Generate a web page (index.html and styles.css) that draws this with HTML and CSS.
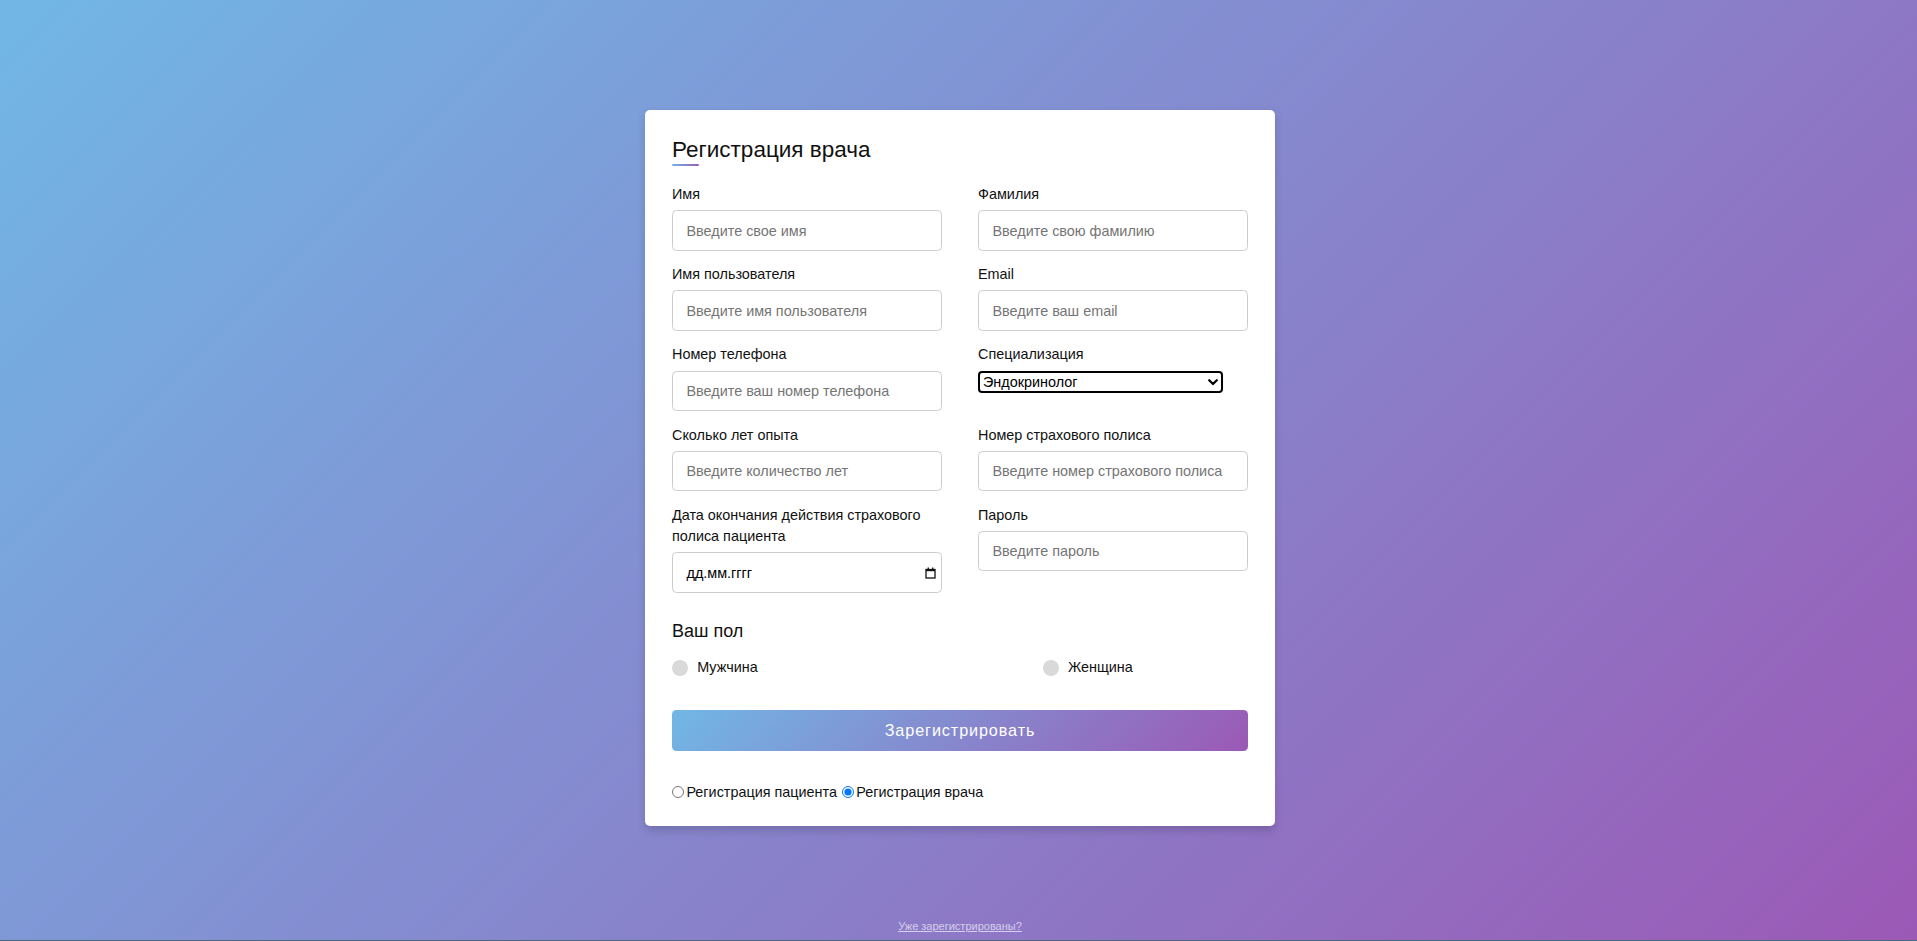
FILE: index.html
```html
<!DOCTYPE html>
<html lang="ru">
<head>
<meta charset="utf-8">
<title>Регистрация врача</title>
<link rel="stylesheet" href="styles.css">
</head>
<body>
  <div class="page">
    <div class="card">
      <div class="title">Регистрация врача</div>
      <form class="form">
        <div class="user-details">
          <div class="input-box">
            <span class="details">Имя</span>
            <input class="field" type="text" placeholder="Введите свое имя">
          </div>
          <div class="input-box">
            <span class="details">Фамилия</span>
            <input class="field" type="text" placeholder="Введите свою фамилию">
          </div>
          <div class="input-box">
            <span class="details">Имя пользователя</span>
            <input class="field" type="text" placeholder="Введите имя пользователя">
          </div>
          <div class="input-box">
            <span class="details details-latin">Email</span>
            <input class="field" type="text" placeholder="Введите ваш email">
          </div>
          <div class="input-box">
            <span class="details">Номер телефона</span>
            <input class="field" type="text" placeholder="Введите ваш номер телефона">
          </div>
          <div class="input-box">
            <span class="details">Специализация</span>
            <div class="select-wrap">
              <select class="select">
                <option>Эндокринолог</option>
                <option>Терапевт</option>
                <option>Кардиолог</option>
              </select>
              <svg class="chevron" width="10" height="7" viewBox="0 0 10 7"><polyline points="1.2,1.2 5,5 8.8,1.2" fill="none" stroke="#000" stroke-width="2.2" stroke-linecap="round" stroke-linejoin="round"/></svg>
            </div>
          </div>
          <div class="input-box">
            <span class="details">Сколько лет опыта</span>
            <input class="field" type="text" placeholder="Введите количество лет">
          </div>
          <div class="input-box">
            <span class="details">Номер страхового полиса</span>
            <input class="field" type="text" placeholder="Введите номер страхового полиса">
          </div>
          <div class="input-box">
            <span class="details">Дата окончания действия страхового полиса пациента</span>
            <div class="field date-field">
              <span class="date-text">дд.мм.гггг</span>
              <svg class="cal" width="11" height="12" viewBox="0 0 11 12">
                <rect x="1" y="2.5" width="9" height="8.5" fill="none" stroke="#111" stroke-width="1.3"/>
                <rect x="1" y="2" width="9" height="2.2" fill="#111"/>
                <rect x="2.6" y="0.5" width="1.3" height="2" fill="#111"/>
                <rect x="7.1" y="0.5" width="1.3" height="2" fill="#111"/>
              </svg>
            </div>
          </div>
          <div class="input-box">
            <span class="details">Пароль</span>
            <input class="field" type="password" placeholder="Введите пароль">
          </div>
        </div>

        <div class="gender-details">
          <span class="gender-title">Ваш пол</span>
          <div class="category">
            <label class="gender-option"><span class="dot"></span><span class="gender">Мужчина</span></label>
            <label class="gender-option"><span class="dot"></span><span class="gender">Женщина</span></label>
          </div>
        </div>

        <button class="submit" type="button">Зарегистрировать</button>

        <div class="switch">
          <label class="switch-option"><input class="switch-radio" type="radio" name="role">Регистрация пациента</label>
          <label class="switch-option"><input class="switch-radio" type="radio" name="role" checked>Регистрация врача</label>
        </div>
      </form>
    </div>
  </div>
  <a class="login" href="#">Уже зарегистрированы?</a>
  <div class="edge"></div>
</body>
</html>
```

FILE: styles.css
```css
* {
  box-sizing: border-box;
}

html, body {
  height: 100%;
}

body {
  margin: 0;
  display: flex;
  flex-direction: column;
  background: linear-gradient(135deg, #71b7e6, #9b59b6);
  font-family: "Liberation Sans", Arial, sans-serif;
  color: #111;
  overflow: hidden;
}

.page {
  flex: 1;
  display: flex;
  justify-content: center;
  align-items: flex-start;
  padding: 110px 0 0 3px;
}

.card {
  width: 630px;
  background: #fff;
  border-radius: 5px;
  padding: 22.5px 27px;
  box-shadow: 0 4.5px 9px rgba(0, 0, 0, 0.15);
}

.title {
  position: relative;
  font-size: 22.5px;
  line-height: 33.75px;
  color: #111;
}

.title::before {
  content: "";
  position: absolute;
  left: 0;
  bottom: 0;
  width: 27px;
  height: 2.7px;
  border-radius: 4.5px;
  background: linear-gradient(135deg, #71b7e6, #9b59b6);
}

.user-details {
  display: flex;
  flex-wrap: wrap;
  justify-content: space-between;
  align-items: flex-start;
  margin: 18px 0 11.5px;
}

.input-box {
  width: calc(50% - 18px);
  margin-bottom: 13.5px;
}

.details {
  display: block;
  font-size: 14.4px;
  line-height: 21.6px;
  margin-bottom: 4.5px;
  color: #111;
}

.details-latin {
  font-weight: 500;
}

.field {
  display: block;
  width: 100%;
  height: 40.5px;
  border: 1px solid #ccc;
  border-radius: 4.5px;
  padding: 0 13.5px;
  font-family: "Liberation Sans", Arial, sans-serif;
  font-size: 14.4px;
  color: #111;
  outline: none;
  background: #fff;
}

.field::placeholder {
  color: #757575;
}

.date-field {
  display: flex;
  align-items: center;
  justify-content: space-between;
  padding: 0 5px 0 13.5px;
}

.date-text {
  color: #000;
  font-size: 14.4px;
}

.cal {
  display: block;
}

.select-wrap {
  position: relative;
  width: 245px;
  height: 22px;
}

.select {
  -webkit-appearance: none;
  appearance: none;
  display: block;
  width: 100%;
  height: 22px;
  border: 2px solid #000;
  border-radius: 4px;
  padding: 0 20px 0 3px;
  font-family: "Liberation Sans", Arial, sans-serif;
  font-size: 14.4px;
  color: #000;
  background: #fff;
  outline: none;
}

.chevron {
  position: absolute;
  right: 5px;
  top: 8px;
}

.gender-title {
  display: block;
  font-size: 18px;
  line-height: 27px;
  color: #111;
}

.category {
  display: flex;
  justify-content: space-between;
  width: 80%;
  margin: 12.6px 0;
}

.gender-option {
  display: flex;
  align-items: center;
  gap: 9px;
  font-size: 14.4px;
  line-height: 21.6px;
}

.dot {
  width: 16.2px;
  height: 16.2px;
  border-radius: 50%;
  background: #d9d9d9;
}

.submit {
  display: block;
  width: 100%;
  height: 40.5px;
  margin: 31px 0 31.5px;
  border: none;
  border-radius: 4.5px;
  background: linear-gradient(135deg, #71b7e6, #9b59b6);
  color: #fff;
  font-family: "Liberation Sans", Arial, sans-serif;
  font-size: 16.2px;
  letter-spacing: 0.9px;
  cursor: pointer;
}

.switch {
  font-size: 14.4px;
  line-height: 21.6px;
  color: #111;
}

.switch-option {
  display: inline;
}

.switch-radio {
  width: 11.7px;
  height: 11.7px;
  margin: 0 2.7px 0 0;
  vertical-align: -1px;
}

.switch-option + .switch-option .switch-radio {
  margin-left: 1px;
}

.login {
  align-self: center;
  font-size: 11px;
  line-height: 13px;
  margin: 0 0 7px 3px;
  color: rgba(255, 255, 255, 0.65);
  text-decoration: underline;
}

.edge {
  height: 1px;
  background: #4a6a7c;
  flex-shrink: 0;
}
```
